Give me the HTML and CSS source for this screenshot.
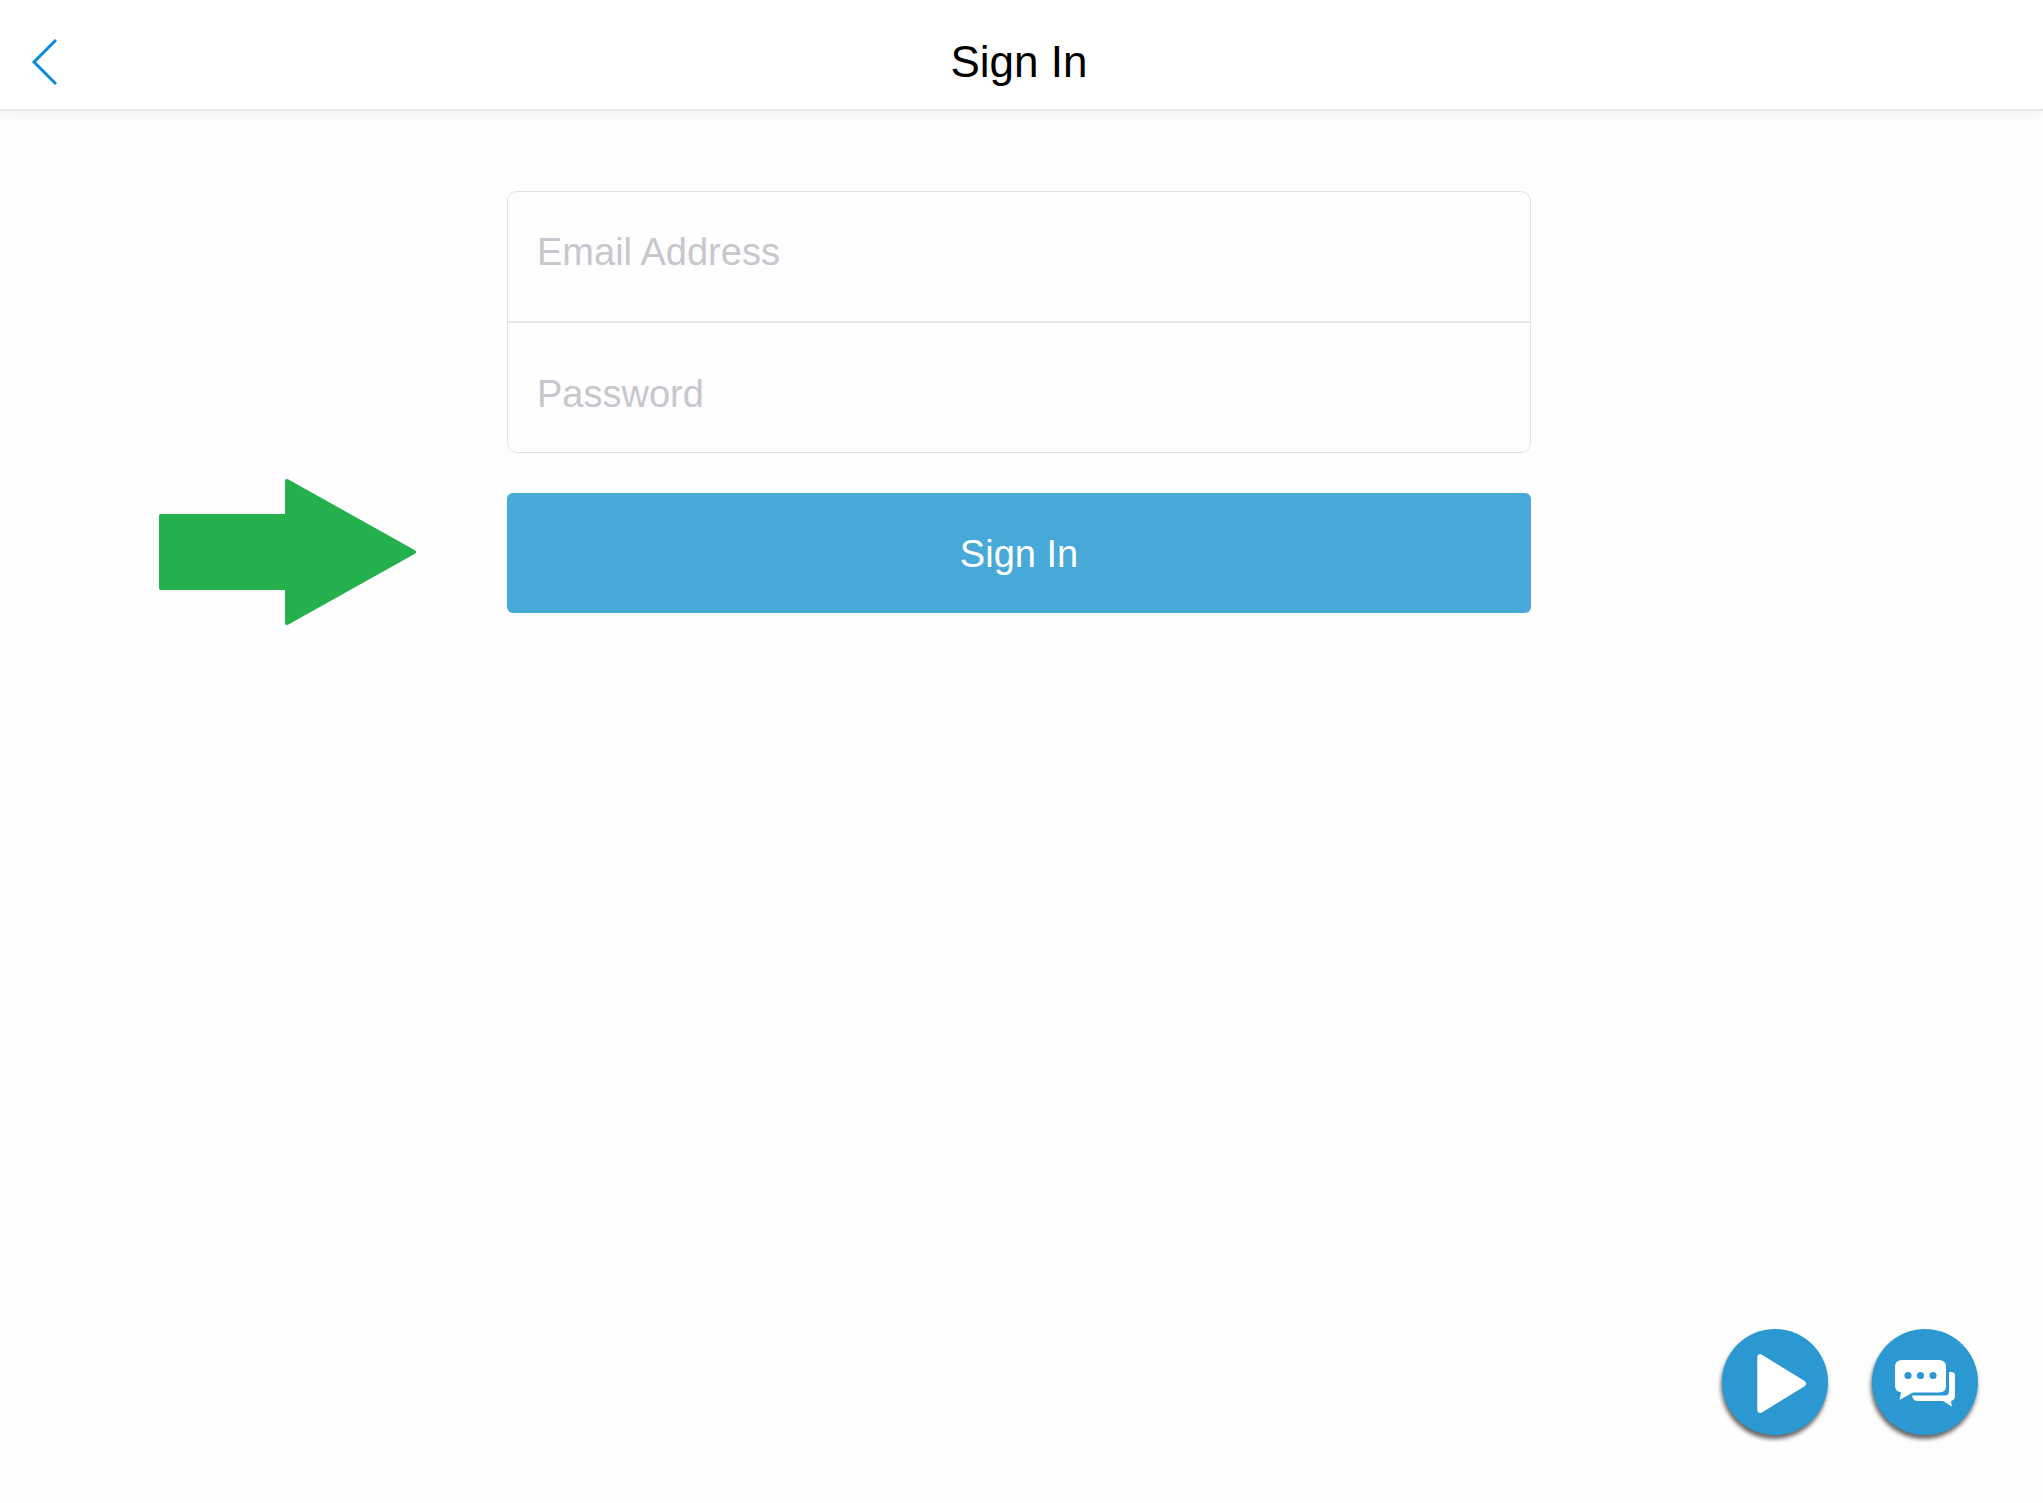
FILE: index.html
```html
<!DOCTYPE html>
<html lang="en">
<head>
  <meta charset="utf-8">
  <meta name="viewport" content="width=device-width, initial-scale=1">
  <title>Sign In</title>
  <link rel="stylesheet" href="styles.css">
</head>
<body>
  <header class="topbar">
    <a class="back" href="#" aria-label="Back">
      <svg width="26" height="46" viewBox="0 0 26 46" aria-hidden="true">
        <path d="M25 1L3 23l22 22" fill="none" stroke="#068ade" stroke-width="3"/>
      </svg>
    </a>
    <h1 class="title">Sign In</h1>
  </header>

  <main class="content">
    <form class="signin">
      <div class="fields">
        <input class="field field-email" type="email" placeholder="Email Address" aria-label="Email Address">
        <input class="field field-password" type="password" placeholder="Password" aria-label="Password">
      </div>
      <div class="action">
        <svg class="pointer" width="258" height="146" viewBox="0 0 258 146" aria-hidden="true">
          <path d="M2 37H128V2L255 73L128 144V109H2Z" fill="#24b14d" stroke="#24b14d" stroke-width="4" stroke-linejoin="round"/>
        </svg>
        <button class="submit" type="submit">Sign In</button>
      </div>
    </form>
  </main>

  <div class="fabs">
    <button class="fab" type="button" aria-label="Play video">
      <svg viewBox="0 0 106 106" aria-hidden="true">
        <path d="M38.3 28.2V81L81 54.6Z" fill="#fff" stroke="#fff" stroke-width="6" stroke-linejoin="round"/>
      </svg>
    </button>
    <button class="fab" type="button" aria-label="Chat">
      <svg viewBox="0 0 106 106" aria-hidden="true">
        <path fill="#fff" d="M30 31H67Q74 31 74 38V57Q74 63.5 67 63.5H41L27.5 71L29 63.3Q23 62.5 23 57V38Q23 31 30 31Z"/>
        <path fill="#fff" d="M77 43H79.5Q83 43 83 46.5V67Q83 71 79 72L79.8 77.5L71 72H46Q41 72 40 66.5H73Q77 66.5 77 62Z"/>
        <g fill="#2b98d2">
          <circle cx="36" cy="46.5" r="3.6"/>
          <circle cx="48.5" cy="46.5" r="3.6"/>
          <circle cx="61" cy="46.5" r="3.6"/>
        </g>
      </svg>
    </button>
  </div>
</body>
</html>
```
FILE: styles.css
```css
* {
  box-sizing: border-box;
}

body {
  margin: 0;
  min-height: 100vh;
  background: #fefefe;
  color: #000;
  font-family: "Liberation Sans", Arial, Helvetica, sans-serif;
}

.topbar {
  display: grid;
  grid-template-columns: 64px 1fr 64px;
  align-items: center;
  padding: 38px 5px 23px 0;
  background: #fff;
  border-bottom: 2px solid #e6e6e6;
  box-shadow: 0 6px 12px rgba(0, 0, 0, 0.04);
}

.back {
  display: flex;
  padding-left: 31px;
}

.title {
  margin: 0;
  font-size: 44px;
  line-height: 48px;
  font-weight: 400;
  text-align: center;
}

.content {
  padding: 80px 5px 0 0;
}

.signin {
  display: flex;
  flex-direction: column;
  gap: 40px;
  max-width: 1024px;
  margin: 0 auto;
}

.fields {
  display: flex;
  flex-direction: column;
  border: 1px solid #e3e3e3;
  border-radius: 10px;
  overflow: hidden;
}

.field {
  width: 100%;
  height: 129px;
  margin: 0;
  padding: 0 29px;
  border: 0;
  outline: 0;
  background: transparent;
  color: #000;
  font: inherit;
  font-size: 38px;
}

.field::placeholder {
  color: #c7c7cd;
  opacity: 1;
}

.field-email {
  height: 131px;
  padding-bottom: 9px;
  border-bottom: 2px solid #e6e6e6;
}

.field-password {
  padding-top: 13px;
}

.action {
  position: relative;
}

.submit {
  display: block;
  width: 100%;
  height: 120px;
  padding: 2px 0 0;
  border: 0;
  border-radius: 6px;
  background: #46a9d7;
  color: #fff;
  font: inherit;
  font-size: 38px;
  cursor: pointer;
}

/* Callout arrow beside the submit button */
.pointer {
  position: absolute;
  top: -14px;
  right: calc(100% + 90px);
}

.fabs {
  position: fixed;
  right: 65px;
  bottom: 68px;
  display: flex;
  gap: 44px;
}

.fab {
  width: 106px;
  height: 106px;
  padding: 0;
  border: 0;
  border-radius: 50%;
  background: #2b98d2;
  box-shadow: -1px 4px 4px rgba(0, 0, 0, 0.6);
  cursor: pointer;
}

.fab svg {
  display: block;
  width: 100%;
}
```
